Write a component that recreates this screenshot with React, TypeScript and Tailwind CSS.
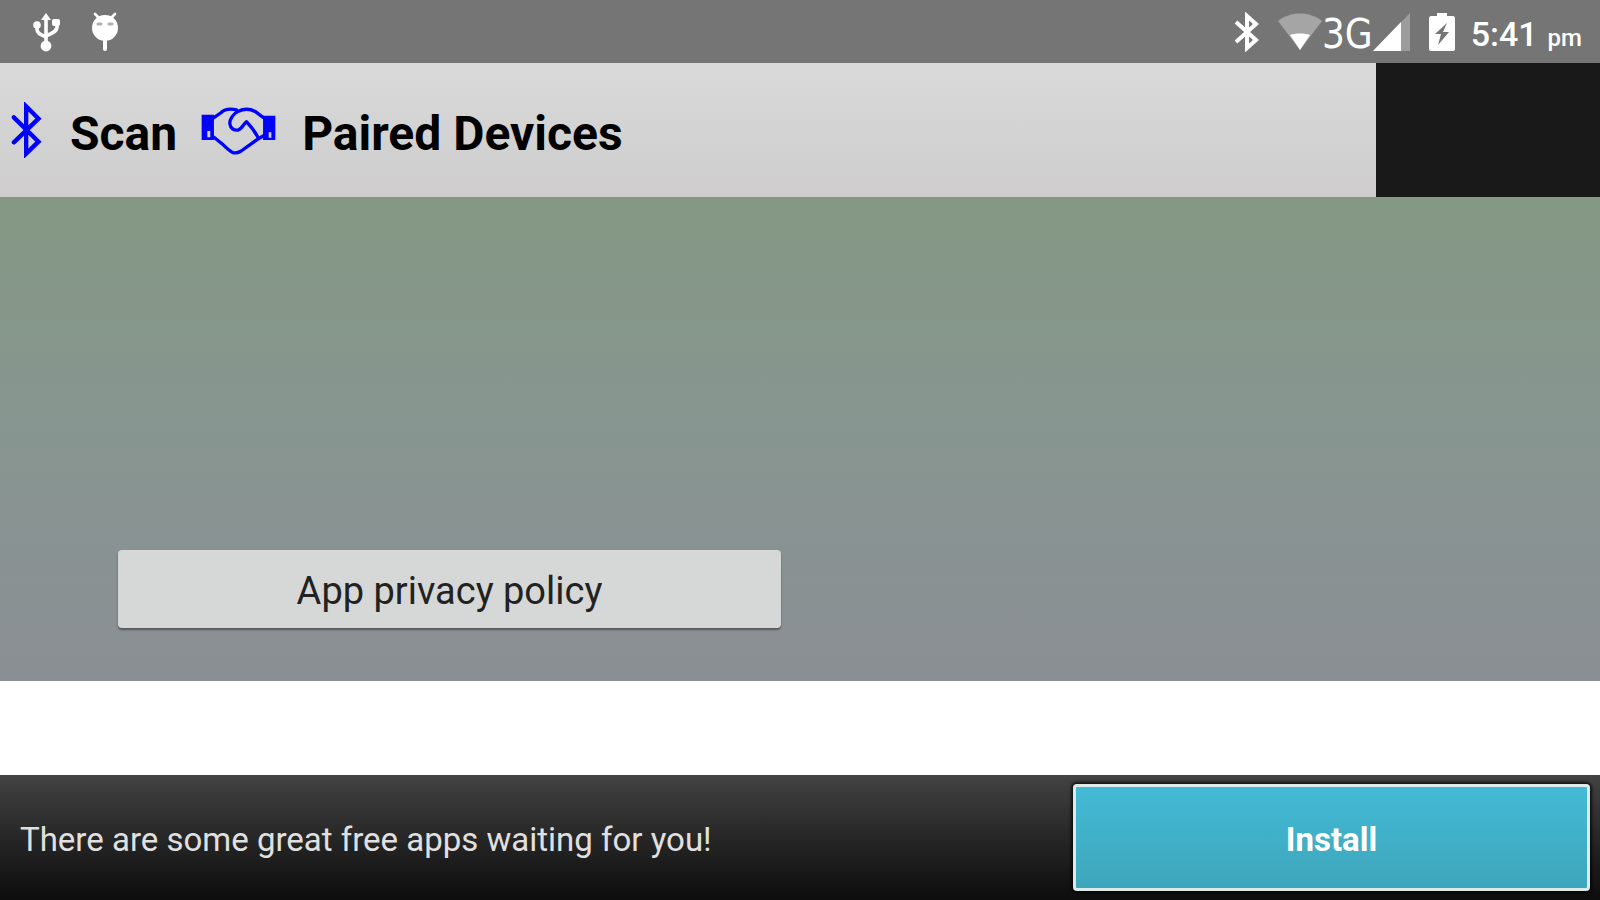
const UsbIcon = () => (
    <svg viewBox="0 0 28 40" className="w-7 h-10" fill="none" stroke="#fff" strokeWidth="3.6" aria-hidden="true">
        <path d="M14 6v28M5 13v4c0 4 3 5 9 8M25 10v5c0 4-4 6-11 9" />
        <path d="M14 1l5 7H9z" fill="#fff" stroke="none" />
        <circle cx="5" cy="13" r="3.8" fill="#fff" stroke="none" />
        <rect x="20" y="7" width="8" height="7" rx="2" fill="#fff" stroke="none" />
        <circle cx="14" cy="34" r="5.4" fill="#fff" stroke="none" />
    </svg>
)

const DroidIcon = () => (
    <svg viewBox="0 0 28 40" className="w-7 h-10" aria-hidden="true">
        <path d="M4 2l5 5M24 2l-5 5" stroke="#fff" strokeWidth="2.6" strokeLinecap="round" />
        <path d="M14 3C6 3 1 9 1 16c0 6 4 10 8 12 2 1 8 1 10 0 4-2 8-6 8-12 0-7-5-13-13-13z" fill="#fff" />
        <path d="M14 27v10" stroke="#fff" strokeWidth="4" strokeLinecap="round" />
        <path d="M7 12h3M18 12h3" stroke="#b0b0b0" strokeWidth="3" strokeLinecap="round" />
    </svg>
)

const StatusBluetoothIcon = () => (
    <svg viewBox="0 0 26 40" className="w-[26px] h-10" fill="none" stroke="#fff" strokeWidth="4" aria-hidden="true">
        <path d="M2 10l20 18-9 8V4l9 8L2 30" />
    </svg>
)

const WifiIcon = () => (
    <svg viewBox="0 0 44 38" className="w-11 h-[38px]" aria-hidden="true">
        <path d="M0 8C12-2 32-2 44 8L22 37z" fill="#a5a5a5" />
        <path d="M12 22c5-2 15-2 20 0L22 37z" fill="#fff" />
    </svg>
)

const SignalIcon = () => (
    <svg viewBox="0 0 38 38" className="w-[38px] h-[38px]" aria-hidden="true">
        <path d="M0 38L37 0v38z" fill="#9c9c9c" />
        <path d="M0 38L28 9v29z" fill="#fff" />
    </svg>
)

const BatteryIcon = () => (
    <svg viewBox="0 0 26 38" className="w-[26px] h-[38px]" aria-hidden="true">
        <path d="M8 0h10v3h6c1 0 2 1 2 2v31c0 1-1 2-2 2H2c-1 0-2-1-2-2V5c0-1 1-2 2-2h6z" fill="#fff" />
        <path d="M18 10L6 21h6L9 32l11-13h-6z" fill="#757575" />
    </svg>
)

const BluetoothIcon = () => (
    <svg viewBox="34 126 92 168" className="w-[31px] h-14" fill="none" stroke="#00f" strokeWidth="13" strokeLinecap="round" aria-hidden="true">
        <path d="M42 172l74 73-37 36V139l37 37-74 71" />
    </svg>
)

const HandshakeIcon = () => (
    <svg viewBox="602 138 226 156" className="w-[75px] h-[52px]" fill="none" stroke="#00f" strokeWidth="10" strokeLinejoin="round" strokeLinecap="round" aria-hidden="true">
        <path fillRule="evenodd" d="M604 170h37v76h-37zM621 219v19h9v-19z" fill="#00f" stroke="none" />
        <path fillRule="evenodd" d="M789 173h37v73h-37zM806 223v16h8v-16z" fill="#00f" stroke="none" />
        <path d="M641 179l21-15c11-11 29-13 47-9M641 238l25 20c13 13 22 22 32 26 9 3 17 0 24-4l49-35 18-11" />
        <path d="M789 178l-24-18c-17-9-37-7-52 0-13 6-26 25-24 38 2 14 13 20 25 18 10-2 14-15 25-25 14 15 25 29 34 46" />
    </svg>
)

const StatusBar = () => (
    <header className="flex justify-between items-center h-[63px] pl-8 pr-[18px] bg-[#757575] text-white">
        <div className="flex items-center gap-[31px]">
            <UsbIcon />
            <DroidIcon />
        </div>
        <div className="flex items-center">
            <StatusBluetoothIcon />
            <div className="flex items-center mx-[18px]">
                <WifiIcon />
                <span className="text-[40px] leading-[48px] pt-1 font-['DejaVu_Sans_Condensed','Noto_Sans',sans-serif]">3G</span>
                <SignalIcon />
            </div>
            <BatteryIcon />
            <div className="flex items-baseline gap-[10px] ml-4 pt-1">
                <span className="text-[34px] leading-[48px] font-medium">5:41</span>
                <span className="text-2xl font-medium">pm</span>
            </div>
        </div>
    </header>
)

const Toolbar = () => (
    <nav className="flex h-[134px] bg-[#191919]">
        <div className="flex flex-1 items-center pl-[11px] bg-linear-to-b from-[#dadada] via-[#d3d3d3] to-[#cfcdcd] text-black text-[48px] leading-[56px] font-bold">
            <button type="button" className="flex items-center gap-[28px]">
                <BluetoothIcon />
                <span className="pt-2">Scan</span>
            </button>
            <button type="button" className="flex items-center gap-[26px] ml-6">
                <HandshakeIcon />
                <span className="pt-2">Paired Devices</span>
            </button>
        </div>
        <div className="w-[14%]" />
    </nav>
)

const App = () => {
    return (
        <div className="flex flex-col min-h-screen bg-white font-[Roboto,sans-serif]">
            <StatusBar />
            <Toolbar />
            <main className="flex flex-1 flex-col justify-end items-start pl-[118px] pb-[53px] bg-linear-to-b from-[#849884] via-[#879590] to-[#8b8f95]">
                <button type="button" className="w-[663px] h-[78px] pt-1 rounded-sm bg-[#d6d8d7] text-[#222] text-[38px] leading-[48px] shadow-[0_2px_2px_rgba(0,0,0,0.4)]">
                    App privacy policy
                </button>
            </main>
            <div className="h-[94px]" />
            <footer className="flex justify-between items-center h-[125px] pl-5 pr-[10px] bg-linear-to-b from-[#434343] to-[#0d0d0d]">
                <p className="pt-1 text-[#e0e0e0] text-[33px] leading-[48px]">There are some great free apps waiting for you!</p>
                <button type="button" className="w-[517px] h-[107px] pt-1 rounded-sm border-3 border-[#dcebea] bg-linear-to-b from-[#43bad6] to-[#3ea6bb] text-white text-[33px] leading-[48px] font-bold shadow-[0_0_3px_2px_rgba(0,0,0,0.7)]">
                    Install
                </button>
            </footer>
        </div>
    )
}

export default App
